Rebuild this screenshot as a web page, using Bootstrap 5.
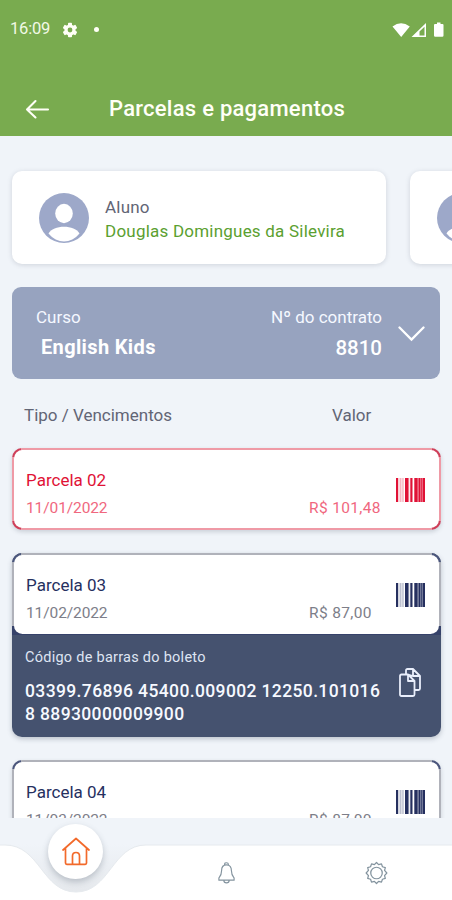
<!DOCTYPE html>
<html lang="pt-BR">
<head>
<meta charset="utf-8">
<meta name="viewport" content="width=device-width, initial-scale=1">
<title>Parcelas e pagamentos</title>
<link href="https://cdn.jsdelivr.net/npm/bootstrap@5.3.0/dist/css/bootstrap.min.css" rel="stylesheet">
<style>
  body{font-family:Roboto,"Liberation Sans",sans-serif;background:#f0f4f9;color:#626575;overflow:hidden}
  svg{display:block;flex:none}
  .phone{width:452px;height:900px}
  .topbar{height:136px;background:#79ab4f;color:#fffff7}
  .status{height:58px;padding:1px 8px 0 10px}
  .clock{font-size:16.5px;letter-spacing:-.2px;margin-right:12px;color:#f1f9e6}
  .dot{width:5px;height:5px;background:#fffff7;margin-left:16px}
  .titlebar{height:30px;margin-top:36px;padding-left:25px}
  .page-title{font-size:22px;line-height:30px;font-weight:500;letter-spacing:.25px;margin-left:59px}
  .scroller{height:682px;padding:35px 0 0 12px}
  .students{gap:24px}
  .student{width:374px;height:93px;border-radius:10px;box-shadow:0 1px 5px #4a556833;padding-left:27px;gap:16px;flex:none}
  .student-lines{font-size:17px;line-height:24px;letter-spacing:.22px;white-space:nowrap;padding-top:2px}
  .student-name{color:#5ba030}
  .course{width:428px;height:92px;margin-top:23px;border-radius:9px;background:#97a3bf;color:#f5f8ff;padding:16px 15px 0 24px}
  .course-label{font-size:17px;line-height:28px}
  .course-name{font-size:20px;line-height:33px;font-weight:700;letter-spacing:.36px;margin-left:5px;color:#fff}
  .course-num{font-size:20.5px;line-height:34px;font-weight:500;color:#fff}
  .course-arrow{margin-top:23px}
  .heads{font-size:17px;line-height:24px;margin:24px 0 21px 12px}
  .heads span:first-child{width:308px}
  .bill{width:429px;--edge:#b0b2ba;--corner:#4b567c;--ink:#26305f;--soft:#7d7e89}
  .bill-late{--edge:#ef9aa6;--corner:#cf3f59;--ink:#e01236;--soft:#f0677e}
  .bill-frame{height:82px;padding:2px;border-radius:10px;box-shadow:0 2px 4px #4a556838;
    background:linear-gradient(var(--corner) 0 0) 0 0/9px 9px no-repeat,
      linear-gradient(var(--corner) 0 0) 100% 0/9px 9px no-repeat,
      linear-gradient(var(--corner) 0 0) 0 100%/9px 9px no-repeat,
      linear-gradient(var(--corner) 0 0) 100% 100%/9px 9px no-repeat,var(--edge)}
  .bill-open .bill-frame{padding-bottom:1px;border-radius:10px 10px 0 0;box-shadow:none;
    background:linear-gradient(var(--corner) 0 0) 0 0/9px 9px no-repeat,
      linear-gradient(var(--corner) 0 0) 100% 0/9px 9px no-repeat,
      linear-gradient(#36426a 0 0) 0 100%/100% 9px no-repeat,var(--edge)}
  .bill-face{border-radius:8.5px;padding:16px 14px 0 12px}
  .bill-name{font-size:17px;line-height:28px;color:var(--ink)}
  .bill-meta{font-size:15.5px;line-height:28px;color:var(--soft)}
  .bill-date{width:283px;letter-spacing:-.1px}
  .bill-sum{letter-spacing:.35px}
  .bars{width:29px;height:24px;margin-top:12px;fill:var(--ink)}
  .gap-list{gap:23px}
  .bill-open{background:#45526f;border-radius:10px;box-shadow:0 2px 5px #4a556850}
  .code-panel{height:102px;padding:13px 20px 0 13px;color:#dfe5f3}
  .code-title{font-size:14.5px;line-height:20px;letter-spacing:.26px}
  .code-text{font-size:17.5px;line-height:23px;font-weight:500;letter-spacing:.37px;margin-top:12px;color:#f6f9ff;white-space:nowrap}
  .copy-icon{margin-top:20px}
  .dock{height:82px}
  .dock-shape{inset:0}
  .home-btn{width:55px;height:55px;left:48px;top:6px;background:#fff;box-shadow:0 3px 6px #4a55684d}
  .dock-items{height:82px;padding:43px 64px 0 218px}
</style>
<script src="https://cdn.jsdelivr.net/npm/bootstrap@5.3.0/dist/js/bootstrap.bundle.min.js"></script>
</head>
<body>
<svg width="0" height="0" class="position-absolute">
  <symbol id="avatar" viewBox="0 0 50 50"><circle cx="25" cy="25" r="25" fill="#9da8c9"/><ellipse cx="25" cy="20.5" rx="8.8" ry="9.7" fill="#fff"/><path d="M9.500 40.500C14 31.500 36 31.500 40.500 40.500C32 51 18 51 9.500 40.500Z" fill="#fff"/></symbol>
  <symbol id="barcode" viewBox="0 0 29 24"><path d="M0 0h2.200v24H0zM9 0h3.500v24H9zM14.300 0h2.200v24h-2.200zM18.300 0h3.400v24h-3.400zM22.500 0h2v24h-2zM25.200 0h1.300v24h-1.300zM27 0h2v24h-2z"/><path opacity=".3" d="M3.500 0h2v24h-2zM6.200 0h1.500v24H6.200zM12.500 0h.8v24h-.8zM21.700 0h7v24h-7z"/></symbol>
</svg>
<div class="phone d-flex flex-column overflow-hidden">
  <header class="topbar flex-shrink-0">
    <div class="status d-flex align-items-center">
      <span class="clock">16:09</span>
      <svg width="16" height="16" viewBox="0 0 16 16"><g fill="#fffff7"><circle cx="8" cy="8" r="5.600"/><g id="t"><rect x="6" y=".7" width="4" height="14.600" rx=".8"/></g><use href="#t" transform="rotate(60 8 8)"/><use href="#t" transform="rotate(120 8 8)"/></g><circle cx="8" cy="8" r="2.400" fill="#79ab4f"/></svg>
      <span class="dot rounded-circle"></span>
      <svg class="ms-auto" width="52" height="16" viewBox="0 0 52 16"><path fill="#fff" d="M.5 4.500Q9 -2.200 17.800 4.500L9.200 15ZM19.500 15L34 1v14ZM42 3q0-1 1-1h2V.500h3.500V2h2q1 0 1 1v10.500q0 1.200-1.200 1.200h-7q-1.300 0-1.300-1.200Z"/><path fill="#79ab4f" d="M27.500 9.600 32.500 4.800v8.700h-5z"/></svg>
    </div>
    <div class="titlebar d-flex align-items-center">
      <svg width="25" height="20" viewBox="0 0 25 20" fill="none" stroke="#fffff7" stroke-width="2.100" stroke-linecap="round" stroke-linejoin="round"><path d="M10.500 2 2 10.500l8.500 8M2 10.500h21"/></svg>
      <h1 class="page-title mb-0">Parcelas e pagamentos</h1>
    </div>
  </header>

  <main class="scroller flex-shrink-0 overflow-hidden">
    <div class="students d-flex">
      <div class="student bg-white d-flex align-items-center">
        <svg width="50" height="50"><use href="#avatar"/></svg>
        <div class="student-lines"><div>Aluno</div><div class="student-name">Douglas Domingues da Silevira</div></div>
      </div>
      <div class="student bg-white d-flex align-items-center">
        <svg width="50" height="50"><use href="#avatar"/></svg>
      </div>
    </div>

    <div class="course d-flex">
      <div><div class="course-label">Curso</div><div class="course-name">English Kids</div></div>
      <div class="ms-auto text-end"><div class="course-label">Nº do contrato</div><div class="course-num">8810</div></div>
      <svg class="course-arrow ms-3" width="27" height="16" viewBox="0 0 27 16" fill="none" stroke="#fff" stroke-width="2.300" stroke-linecap="round"><path d="M1.500 1.500 13.500 13.500 25.500 1.500"/></svg>
    </div>

    <div class="heads d-flex"><span>Tipo / Vencimentos</span><span>Valor</span></div>

    <div class="gap-list d-flex flex-column">
      <section class="bill bill-late">
        <div class="bill-frame"><div class="bill-face bg-white h-100 d-flex justify-content-between">
          <div><div class="bill-name">Parcela 02</div><div class="bill-meta d-flex"><span class="bill-date">11/01/2022</span><span class="bill-sum">R$ 101,48</span></div></div>
          <svg class="bars"><use href="#barcode"/></svg>
        </div></div>
      </section>
      <section class="bill bill-open">
        <div class="bill-frame"><div class="bill-face bg-white h-100 d-flex justify-content-between">
          <div><div class="bill-name">Parcela 03</div><div class="bill-meta d-flex"><span class="bill-date">11/02/2022</span><span class="bill-sum">R$ 87,00</span></div></div>
          <svg class="bars"><use href="#barcode"/></svg>
        </div></div>
        <div class="code-panel d-flex justify-content-between">
          <div><div class="code-title">Código de barras do boleto</div><div class="code-text">03399.76896 45400.009002 12250.101016<br>8 88930000009900</div></div>
          <svg class="copy-icon" width="22" height="29" viewBox="0 0 22 29" fill="none" stroke="#e9eefb" stroke-width="1.800" stroke-linejoin="round"><path d="M1 8q0-1.500 1.500-1.500H9l6.500 6.500v13.500q0 1.500-1.500 1.500H2.500Q1 28 1 26.500ZM9 6.500V13h6.500M7 6.500V2.500Q7 1 8.500 1H14l7 7v12.500q0 1.500-1.500 1.500h-4M14 1v7h7M9 6.500l5 1.500"/></svg>
        </div>
      </section>
      <section class="bill">
        <div class="bill-frame"><div class="bill-face bg-white h-100 d-flex justify-content-between">
          <div><div class="bill-name">Parcela 04</div><div class="bill-meta d-flex"><span class="bill-date">11/03/2022</span><span class="bill-sum">R$ 87,00</span></div></div>
          <svg class="bars"><use href="#barcode"/></svg>
        </div></div>
      </section>
    </div>
  </main>

  <nav class="dock position-relative flex-shrink-0">
    <svg class="dock-shape position-absolute" width="452" height="82" viewBox="0 0 452 82"><defs><linearGradient id="sh" x1="0" y1="0" x2="0" y2="1"><stop offset="0" stop-color="#f0f4f9"/><stop offset="1" stop-color="#e5e8ec"/></linearGradient></defs><path fill="url(#sh)" d="M8 26H145L100 76H50Z"/><path fill="#fff" stroke="#e6eaee" stroke-width="1" d="M-1 27H5C40 27 42 74 76 74S112 27 146 27H453V83H-1Z"/></svg>
    <div class="home-btn position-absolute rounded-circle d-flex align-items-center justify-content-center">
      <svg width="28" height="29" viewBox="0 0 28 29" fill="none" stroke="#f26a2b" stroke-width="1.700" stroke-linecap="round" stroke-linejoin="round"><path d="M1 13 14 1.500 27 13M3.500 11.500V26q0 1.300 1.300 1.300h18.400q1.300 0 1.300-1.300V11.500M10.500 27V19q0-3.500 3.500-3.500t3.500 3.500v8"/></svg>
    </div>
    <div class="dock-items position-relative d-flex justify-content-between">
      <svg width="17" height="24" viewBox="0 0 19 25" fill="none" stroke="#84949f" stroke-width="1.300" stroke-linejoin="round"><path d="M7.500 4V2.500q0-1.500 2-1.500t2 1.500V4M9.500 3.500c-4 0-5.500 3-5.500 6.500 0 4.500-1 5.500-3 8v2.500h17V18c-2-2.500-3-3.500-3-8 0-3.500-1.500-6.500-5.500-6.500ZM6.500 20.500q0 3 3 3t3-3"/></svg>
      <svg width="23" height="24" viewBox="0 0 24 24" fill="none" stroke="#84949f" stroke-width="1.300" stroke-linejoin="round"><circle cx="12" cy="12" r="6"/><path d="M12 1l2.200 2.300 3-.8 1 3 3 .8-.8 3L22.800 12l-2.400 2.700.8 3-3 .8-1 3-3-.8L12 23l-2.200-2.300-3 .8-1-3-3-.8.8-3L1.200 12l2.400-2.700-.8-3 3-.8 1-3 3 .8Z"/></svg>
    </div>
  </nav>
</div>
</body>
</html>
